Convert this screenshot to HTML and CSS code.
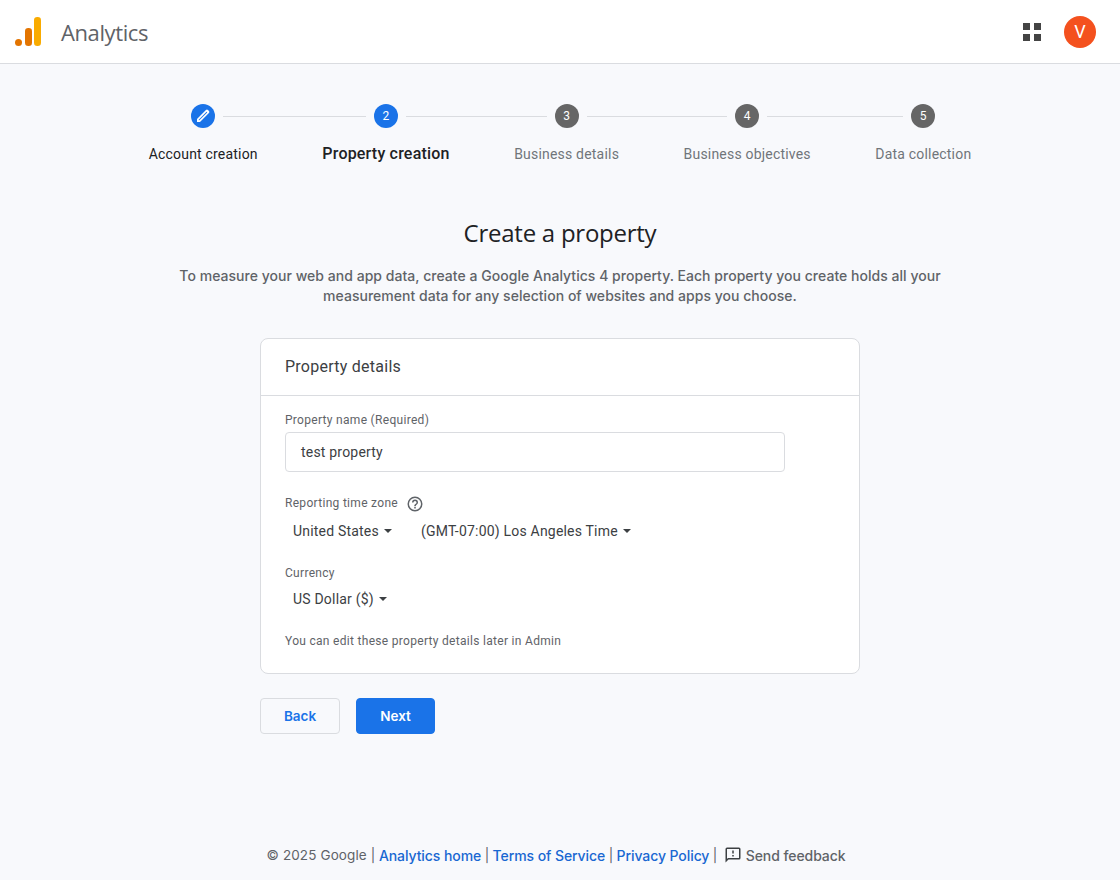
FILE: index.html
```html
<!DOCTYPE html>
<html lang="en">
<head>
<meta charset="utf-8">
<title>Analytics</title>
<link rel="stylesheet" href="styles.css">
</head>
<body>
<header class="topbar">
  <div class="brand">
    <svg class="logo" width="30" height="32" viewBox="0 0 30 32"><rect x="21" y="1" width="7" height="29" rx="3.3" fill="#f9ab00"/><rect x="12" y="12" width="7" height="18" rx="3.3" fill="#e37400"/><circle cx="5.500" cy="26.500" r="3.500" fill="#e37400"/></svg>
    <span class="brand-name">Analytics</span>
  </div>
  <div class="top-actions">
    <svg class="apps" width="18" height="18" viewBox="0 0 18 18"><rect width="7" height="7" fill="#444"/><rect x="11" width="7" height="7" fill="#444"/><rect y="11" width="7" height="7" fill="#444"/><rect x="11" y="11" width="7" height="7" fill="#444"/></svg>
    <div class="avatar">V</div>
  </div>
</header>

<main class="content">
  <ol class="stepper">
    <li class="step done">
      <div class="step-head"><span class="line hidden"></span><span class="dot"><svg width="16" height="16" viewBox="0 0 24 24"><path d="M3 21v-4.500L16.400 3.100a2.200 2.200 0 0 1 3.100 0l1.400 1.400a2.200 2.200 0 0 1 0 3.100L7.500 21zm2.600-2.600h.9L18.300 6.600l-.9-.9L5.600 17.500z" fill="#fff"/></svg></span><span class="line"></span></div>
      <div class="step-label">Account creation</div>
    </li>
    <li class="step current">
      <div class="step-head"><span class="line"></span><span class="dot">2</span><span class="line"></span></div>
      <div class="step-label">Property creation</div>
    </li>
    <li class="step">
      <div class="step-head"><span class="line"></span><span class="dot">3</span><span class="line"></span></div>
      <div class="step-label">Business details</div>
    </li>
    <li class="step">
      <div class="step-head"><span class="line"></span><span class="dot">4</span><span class="line"></span></div>
      <div class="step-label">Business objectives</div>
    </li>
    <li class="step">
      <div class="step-head"><span class="line"></span><span class="dot">5</span><span class="line hidden"></span></div>
      <div class="step-label">Data collection</div>
    </li>
  </ol>

  <h1 class="title">Create a property</h1>
  <p class="lead">To measure your web and app data, create a Google Analytics 4 property. Each property you create holds all your measurement data for any selection of websites and apps you choose.</p>

  <section class="card">
    <h2 class="card-title">Property details</h2>
    <div class="card-body">
      <div class="field-label">Property name (Required)</div>
      <div class="input">test property</div>

      <div class="field-label zone-label">Reporting time zone
        <svg class="help" width="18" height="18" viewBox="0 0 24 24"><path d="M11 18h2v-2h-2zm1-16a10 10 0 1 0 0 20 10 10 0 0 0 0-20zm0 18a8 8 0 1 1 0-16 8 8 0 0 1 0 16zm0-14a4 4 0 0 0-4 4h2a2 2 0 1 1 4 0c0 2-3 1.750-3 5h2c0-2.250 3-2.500 3-5a4 4 0 0 0-4-4z" fill="#5f6368"/></svg>
      </div>
      <div class="selects">
        <span class="select country">United States<i class="caret"></i></span>
        <span class="select">(GMT-07:00) Los Angeles Time<i class="caret"></i></span>
      </div>

      <div class="field-label currency-label">Currency</div>
      <div class="selects currency"><span class="select">US Dollar ($)<i class="caret"></i></span></div>

      <p class="hint">You can edit these property details later in Admin</p>
    </div>
  </section>

  <div class="actions">
    <button class="btn back">Back</button>
    <button class="btn next">Next</button>
  </div>
</main>

<footer class="footer">
  <span class="plain copyright">© 2025 Google |</span>
  <a href="#">Analytics home</a>
  <span class="plain">|</span>
  <a href="#">Terms of Service</a>
  <span class="plain">|</span>
  <a href="#">Privacy Policy</a>
  <span class="plain">|</span>
  <span class="feedback"><svg width="18" height="18" viewBox="0 0 24 24"><path d="M20 2H4a2 2 0 0 0-2 2v18l4-4h14a2 2 0 0 0 2-2V4a2 2 0 0 0-2-2zm0 14H5.200L4 17.200V4h16zM11 12h2v2h-2zm0-6h2v4h-2z" fill="#3c4043"/></svg>Send feedback</span>
</footer>
</body>
</html>
```

FILE: styles.css
```css
* { box-sizing: border-box; }
html, body { margin: 0; height: 100%; }
body {
  background: #f8f9fc;
  color: #202124;
  font-family: Roboto, "Liberation Sans", sans-serif;
  font-size: 14px;
  letter-spacing: 0.2px;
  display: flex;
  flex-direction: column;
  min-height: 880px;
}
.topbar {
  height: 64px;
  background: #fff;
  border-bottom: 1px solid #dadce0;
  display: flex;
  align-items: center;
  justify-content: space-between;
  padding: 0 24px 0 13px;
  flex: none;
}
.brand { display: flex; align-items: center; }
.logo { display: block; }
.brand-name {
  margin-left: 18px;
  font-family: "Open Sans", sans-serif;
  font-size: 22px;
  letter-spacing: -0.4px;
  color: #5f6368;
}
.top-actions { display: flex; align-items: center; gap: 23px; }
.avatar {
  width: 32px;
  height: 32px;
  border-radius: 50%;
  background: #f4511e;
  color: #fff;
  font-size: 18px;
  display: flex;
  align-items: center;
  justify-content: center;
}
.content { flex: 1; display: flex; flex-direction: column; align-items: center; }
.stepper {
  list-style: none;
  margin: 40px 0 0;
  padding: 0;
  display: flex;
}
.step { display: flex; flex-direction: column; }
.step-head { display: flex; align-items: center; height: 24px; }
.line { flex: 1; height: 1px; background: #dadce0; }
.line.hidden { background: transparent; }
.dot {
  width: 24px;
  height: 24px;
  margin: 0 8px;
  border-radius: 50%;
  background: #666;
  color: #fff;
  font-size: 12px;
  display: flex;
  align-items: center;
  justify-content: center;
  flex: none;
}
.done .dot, .current .dot { background: #1a73e8; }
.step-label {
  margin-top: 16px;
  padding: 0 32.25px;
  line-height: 20px;
  color: #70757a;
  white-space: nowrap;
  text-align: center;
}
.done .step-label { color: #202124; }
.current .step-label { color: #202124; font-weight: 500; font-size: 16px; }
.title {
  margin: 53px 0 0;
  font-family: "Open Sans", sans-serif;
  font-size: 24px;
  line-height: 32px;
  font-weight: 400;
  letter-spacing: -0.25px;
  color: #202124;
}
.lead {
  margin: 17px 0 0;
  width: 800px;
  text-align: center;
  font-family: Inter, sans-serif;
  font-size: 14px;
  font-weight: 500;
  letter-spacing: 0.03px;
  line-height: 20px;
  color: #5f6368;
}
.card {
  margin-top: 32px;
  width: 600px;
  height: 336px;
  background: #fff;
  border: 1px solid #dadce0;
  border-radius: 8px;
}
.card-title {
  margin: 0;
  height: 57px;
  padding: 0 24px 2px;
  display: flex;
  align-items: center;
  border-bottom: 1px solid #dadce0;
  font-size: 16px;
  font-weight: 400;
  letter-spacing: 0.25px;
  color: #3c4043;
}
.card-body { padding: 15px 24px 0; }
.field-label { font-size: 12px; line-height: 18px; letter-spacing: 0.3px; color: #5f6368; }
.input {
  margin-top: 3px;
  width: 500px;
  height: 40px;
  border: 1px solid #dadce0;
  border-radius: 4px;
  padding: 0 15px;
  display: flex;
  align-items: center;
  color: #3c4043;
}
.zone-label { margin-top: 22px; display: flex; align-items: center; gap: 8px; height: 18px; }
.help { display: block; margin-top: 2px; }
.selects { margin-top: 9px; padding-left: 8px; display: flex; height: 20px; align-items: center; color: #3c4043; line-height: 20px; }
.select { display: inline-flex; align-items: center; }
.country { margin-right: 29px; }
.caret {
  margin-left: 5px;
  width: 0;
  height: 0;
  border-left: 4px solid transparent;
  border-right: 4px solid transparent;
  border-top: 4px solid #3c4043;
}
.currency-label { margin-top: 23px; }
.currency { margin-top: 7px; }
.hint { margin: 23px 0 0; font-size: 12px; line-height: 18px; letter-spacing: 0.3px; color: #5f6368; }
.actions { width: 600px; margin-top: 24px; display: flex; gap: 16px; }
.btn {
  height: 36px;
  border-radius: 4px;
  font-family: Inter, sans-serif;
  font-size: 13.500px;
  font-weight: 600;
  letter-spacing: 0;
  cursor: pointer;
}
.back { width: 80px; background: transparent; border: 1px solid #dadce0; color: #1a73e8; }
.next { width: 79px; background: #1a73e8; border: 1px solid #1a73e8; color: #fff; }
.footer {
  flex: none;
  height: 50px;
  padding-right: 8px;
  display: flex;
  align-items: center;
  justify-content: center;
  gap: 3.5px;
  font-family: Inter, sans-serif;
  font-size: 14px;
  font-weight: 500;
  letter-spacing: -0.08px;
  color: #5f6368;
}
.plain { font-weight: 400; font-size: 13.500px; }
.copyright { letter-spacing: 0.12px; }
.footer a { color: #1967d2; font-weight: 500; text-decoration: none; }
.feedback { display: inline-flex; align-items: center; gap: 4px; margin-left: 3px; font-size: 14px; }
```
